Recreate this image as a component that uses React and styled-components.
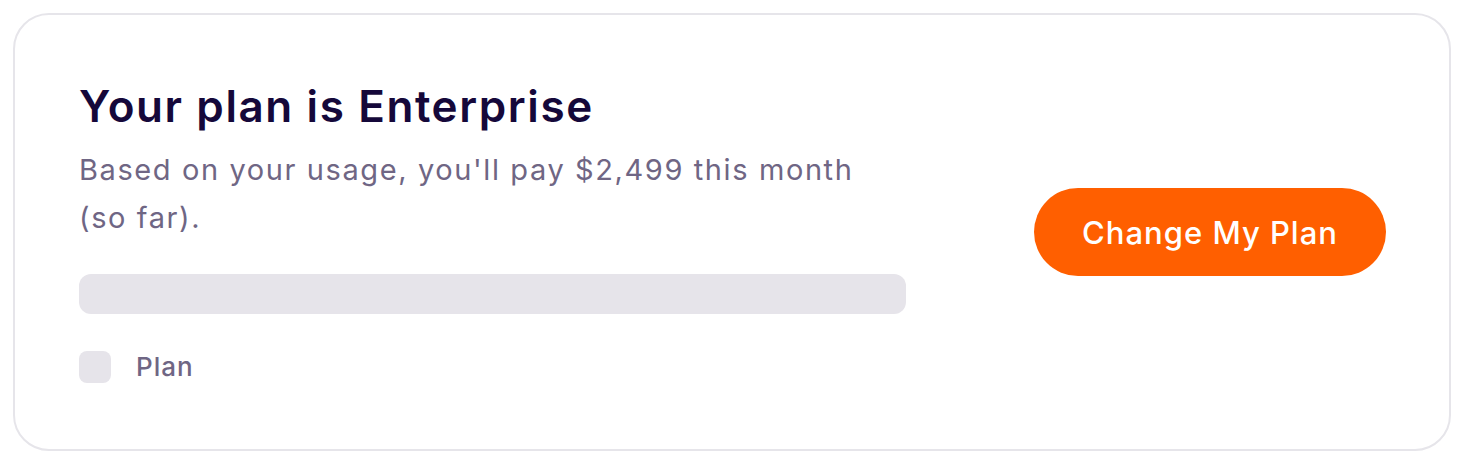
import React from 'react';
import styled, {createGlobalStyle} from 'styled-components';

const GlobalStyle = createGlobalStyle`
	html, body {
		margin : 0;
		padding : 0;
		background : #fff;
		font-family : Inter, "Noto Sans", sans-serif;
	}
`
const Page = styled.div`
	padding : 13px;
`
const Card = styled.section`
	box-sizing : border-box;
	width : 1438px;
	height : 438px;
	border : 2px solid #e6e5ea;
	border-radius : 36px;
	padding : 0 63px 4px 64px;
	display : flex;
	align-items : center;
	justify-content : space-between;
`
const Info = styled.div`
	width : 827px;
	display : flex;
	flex-direction : column;
`
const Title = styled.h2`
	margin : 0;
	font-size : 44px;
	font-weight : 600;
	letter-spacing : 1.6px;
	line-height : 56px;
	color : #15083a;
`
const Subtitle = styled.p`
	margin : 12px 0 0;
	width : 800px;
	font-size : 29px;
	letter-spacing : 1.6px;
	line-height : 48px;
	color : #6f6684;
`
const Bar = styled.div`
	margin-top : 32px;
	height : 40px;
	border-radius : 12px;
	background : #e6e4ea;
`
const Legend = styled.div`
	margin-top : 37px;
	display : flex;
	align-items : center;
	gap : 25px;
	font-size : 26px;
	font-weight : 500;
	letter-spacing : 1px;
	color : #6f6684;
`
const Swatch = styled.span`
	width : 32px;
	height : 32px;
	border-radius : 8px;
	background : ${p => p.color};
`
const Button = styled.button`
	width : 352px;
	height : 88px;
	margin-top : 4px;
	border : none;
	border-radius : 44px;
	background : #ff5f00;
	color : #fff;
	font-family : inherit;
	font-size : 31px;
	font-weight : 500;
	letter-spacing : 1px;
	cursor : pointer;
`

const App = ()=>{
	return (
		<Page>
			<GlobalStyle />
			<Card>
				<Info>
					<Title>Your plan is Enterprise</Title>
					<Subtitle>Based on your usage, you'll pay $2,499 this month (so far).</Subtitle>
					<Bar />
					<Legend>
						<Swatch color="#e6e4ea" />
						Plan
					</Legend>
				</Info>
				<Button>Change My Plan</Button>
			</Card>
		</Page>
	)
};

export default App;
